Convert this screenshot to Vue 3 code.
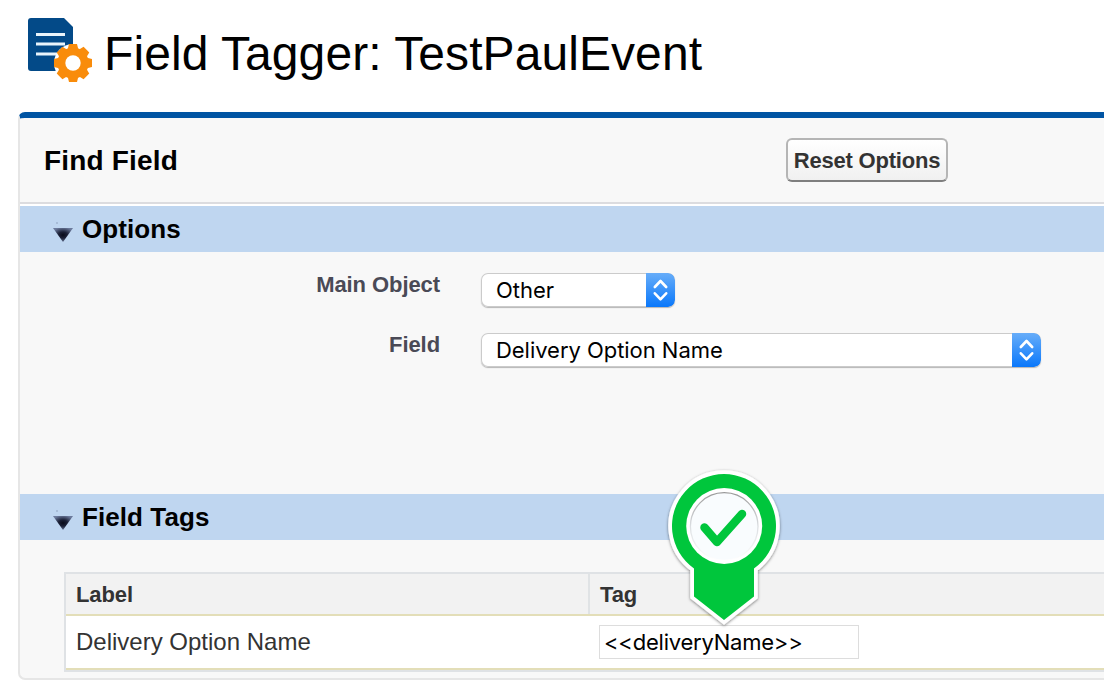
<script setup>
const selects = [
  { label: 'Main Object', value: 'Other', size: 'short' },
  { label: 'Field', value: 'Delivery Option Name', size: 'long' },
]
const rows = [{ label: 'Delivery Option Name', tag: '<<deliveryName>>' }]
const teeth = [0, 45, 90, 135, 180, 225, 270, 315]
</script>

<template>
  <main class="page">
    <header class="title-bar">
      <svg class="logo" viewBox="0 0 66 66" width="66" height="66">
        <path d="M3 0H36L45 9V53H3Q0 53 0 50V3Q0 0 3 0Z" fill="#034a88" />
        <path d="M8 16.5H37M8 26H37M8 36H30" stroke="#e9f4fb" stroke-width="3" />
        <circle cx="45" cy="45" r="19" fill="#fff" />
        <g fill="#f98c0b">
          <circle cx="45" cy="45" r="15.6" />
          <path
            v-for="angle in teeth"
            :key="angle"
            d="M39.5 32L41 26H49L50.5 32Z"
            :transform="`rotate(${angle} 45 45)`"
          />
        </g>
        <circle cx="45" cy="45" r="7.7" fill="#fff" />
      </svg>
      <h1>Field Tagger: TestPaulEvent</h1>
    </header>

    <section class="panel">
      <div class="panel-head">
        <h2>Find Field</h2>
        <button type="button" class="reset">Reset Options</button>
      </div>

      <div class="section-bar first">
        <svg class="arrow" viewBox="0 0 20 20" width="20" height="20">
          <defs>
            <radialGradient id="arrow-a" cx=".5" cy=".5" r=".55">
              <stop offset="0" stop-color="#080a18" />
              <stop offset=".4" stop-color="#1b2036" />
              <stop offset="1" stop-color="#6b7a9c" />
            </radialGradient>
          </defs>
          <path d="M0 6H20L10 20Z" fill="url(#arrow-a)" /><path d="M3 1H5" stroke="#91a4c0" />
        </svg>
        <h3>Options</h3>
      </div>

      <div class="options">
        <div v-for="item in selects" :key="item.label" class="option-row">
          <span class="option-label">{{ item.label }}</span>
          <div class="select" :class="item.size">
            <span class="ui-text">{{ item.value }}</span>
            <svg class="stepper" viewBox="0 0 29 34" width="29" height="34">
              <path d="M8.800 14L14.500 8L20.200 14M8.800 20.300L14.500 26.300L20.200 20.300" />
            </svg>
          </div>
        </div>
      </div>

      <div class="section-bar">
        <svg class="arrow" viewBox="0 0 20 20" width="20" height="20">
          <path d="M0 6H20L10 20Z" fill="url(#arrow-a)" /><path d="M3 1H5" stroke="#91a4c0" />
        </svg>
        <h3>Field Tags</h3>
      </div>

      <div class="table">
        <div class="row head">
          <span class="cell label">Label</span>
          <span class="cell tag">Tag</span>
        </div>
        <div v-for="row in rows" :key="row.tag" class="row body">
          <span class="cell label name">{{ row.label }}</span>
          <span class="cell tag"><span class="tag-box ui-text">{{ row.tag }}</span></span>
        </div>
      </div>
    </section>

    <svg class="pin" viewBox="0 0 130 170" width="130" height="170">
      <defs>
        <filter id="pin-shadow" x="-20%" y="-20%" width="140%" height="140%">
          <feDropShadow dx="0" dy="1" stdDeviation="1.4" flood-color="#000" flood-opacity=".5" />
        </filter>
        <linearGradient id="disc-edge" x1="0" y1="0" x2="0" y2="1">
          <stop offset="0" stop-color="#999" />
          <stop offset=".5" stop-color="#dcdfe2" />
          <stop offset="1" stop-color="#fff" />
        </linearGradient>
      </defs>
      <path
        d="M34 108.500A52 52 0 1 1 94 108.500V136.500L64 160L34 136.500Z"
        fill="#00c63c" stroke="#fff" stroke-width="7.5" filter="url(#pin-shadow)"
      />
      <path d="M34 108.500A52 52 0 1 1 94 108.500V136.500L64 160L34 136.500Z" fill="#00c63c" />
      <circle cx="64.200" cy="66" r="38" fill="#fff" />
      <circle cx="64.200" cy="66.500" r="33.800" fill="#f9fcfe" stroke="url(#disc-edge)" stroke-width="1.300" />
      <path d="M44.500 67.500L57 82L82 54" class="check" />
    </svg>
  </main>
</template>

<style>
html,
body {
  margin: 0;
  overflow: hidden;
  background: #fff;
}
</style>

<style scoped>
* {
  box-sizing: border-box;
}
.page {
  position: relative;
  height: 686px;
  overflow: hidden;
  font-family: "Liberation Sans", Arial, sans-serif;
  color: #000;
}
h1,
h2,
h3 {
  margin: 0;
  white-space: nowrap;
}
.title-bar {
  display: flex;
  height: 112px;
  padding: 18px 0 0 28px;
}
h1 {
  margin-left: 10px;
  font-size: 48px;
  font-weight: 400;
  line-height: 72px;
  letter-spacing: 0.08px;
}
.panel {
  height: 568px;
  margin-left: 18px;
  border-top: 6px solid #0054a3;
  border-left: 2px solid #e6e6e6;
  border-bottom: 2px solid #e6e6e6;
  border-radius: 7px 0 0 7px;
  background: #f8f8f8;
}
.panel-head {
  display: flex;
  align-items: center;
  height: 86px;
  padding-left: 24px;
  border-bottom: 2px solid #dcdcdf;
}
h2 {
  width: 742px;
  padding-top: 2px;
  font-size: 28px;
  line-height: 82px;
  letter-spacing: 0.18px;
}
.reset {
  width: 162px;
  height: 44px;
  padding: 1px 0 0;
  border: 2px solid #b5b5b5;
  border-bottom-color: #7f7f7f;
  border-radius: 6px;
  background: linear-gradient(#fff, #f0f0f0);
  color: #333;
  font: bold 22px/40px "Liberation Sans", Arial, sans-serif;
  letter-spacing: -0.2px;
  white-space: nowrap;
}
.section-bar {
  display: flex;
  align-items: center;
  height: 46px;
  padding-left: 33px;
  background: #bfd6f0;
}
.section-bar.first {
  height: 48px;
  border-top: 2px solid #fff;
}
.arrow {
  margin-top: 6px;
}
h3 {
  margin-left: 9px;
  font-size: 26px;
  line-height: 46px;
  letter-spacing: 0.08px;
}
.options {
  display: flex;
  flex-direction: column;
  gap: 26px;
  height: 242px;
  padding-top: 21px;
}
.option-row {
  display: flex;
  height: 34px;
}
.option-label {
  width: 420px;
  margin-right: 41px;
  color: #4a4a56;
  font-size: 22px;
  font-weight: 700;
  line-height: 23px;
  letter-spacing: -0.08px;
  text-align: right;
}
.select {
  display: flex;
  justify-content: space-between;
  height: 34px;
  padding-left: 15px;
  border-radius: 7px;
  background: #fff;
  box-shadow: inset 0 0 0 1px #cbcbcb, 0 1px 1px #b5b5b5;
  overflow: hidden;
}
.select.short {
  width: 194px;
}
.select.long {
  width: 560px;
}
.ui-text {
  font-family: Inter, "Liberation Sans", sans-serif;
  font-size: 22px;
  line-height: 34px;
  letter-spacing: -0.04px;
  font-feature-settings: "calt" 0;
  white-space: nowrap;
}
.stepper {
  flex: none;
  border-radius: 0 7px 7px 0;
  background: linear-gradient(#67adf9, #0a78fb);
  fill: none;
  stroke: #fff;
  stroke-width: 2.6;
  stroke-linecap: round;
  stroke-linejoin: round;
}
.table {
  margin: 32px 0 0 44px;
  border: 2px solid #dfe2e5;
  border-right: 0;
  background: #fff;
}
.row {
  display: flex;
  border-bottom: 2px solid #e3deb8;
}
.head {
  height: 42px;
  background: #f2f2f2;
  color: #333;
  font-size: 22px;
  font-weight: 700;
  line-height: 41px;
  letter-spacing: -0.1px;
}
.body {
  height: 54px;
  color: #333;
  font-size: 24px;
  line-height: 52px;
}
.cell.label {
  width: 522px;
  padding-left: 10px;
}
.head .tag {
  padding-left: 10px;
  border-left: 2px solid #e0e3e5;
}
.body .tag {
  display: flex;
  align-items: center;
  padding-left: 11px;
}
.tag-box {
  width: 260px;
  height: 34px;
  padding-left: 4px;
  border: 1px solid #ddd;
  line-height: 33px;
  letter-spacing: -0.22px;
  color: #000;
}
.pin {
  position: absolute;
  left: 660px;
  top: 460px;
}
.check {
  fill: none;
  stroke: #00c63c;
  stroke-width: 8.5;
  stroke-linecap: round;
  stroke-linejoin: round;
}
</style>
